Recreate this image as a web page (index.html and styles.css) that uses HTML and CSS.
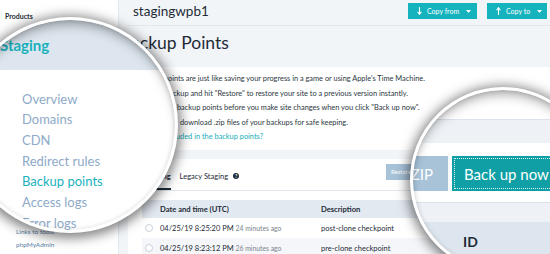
FILE: index.html
```html
<!DOCTYPE html>
<html lang="en">
<head>
    <meta charset="UTF-8">
    <meta name="viewport" content="width=device-width, initial-scale=1.0">
    <title>Backup Points</title>
    <link rel="stylesheet" href="styles.css">
</head>
<body>
    <div class="app">
        <aside class="sidebar">
            <div class="side-title">Products</div>
            <div class="side-links">
                <div>Links to tools</div>
                <div>phpMyAdmin</div>
            </div>
        </aside>

        <main class="main">
            <header class="topbar">
                <div class="site-name">stagingwpb1</div>
                <div class="copy-btns">
                    <button class="copy-btn from">
                        <svg width="5" height="8" viewBox="0 0 5 8"><path d="M2.5 0v6.5M0.6 4.8l1.9 2.6 1.9-2.6" stroke="#fff" stroke-width="1.1" fill="none"/></svg>
                        Copy from
                        <svg class="caret" width="5" height="3" viewBox="0 0 5 3"><path d="M0 0h5L2.5 3z" fill="#fff"/></svg>
                    </button>
                    <button class="copy-btn to">
                        <svg width="5" height="8" viewBox="0 0 5 8"><path d="M2.5 8V1.5M0.6 3.2l1.9-2.6 1.9 2.6" stroke="#fff" stroke-width="1.1" fill="none"/></svg>
                        Copy to
                        <svg class="caret" width="5" height="3" viewBox="0 0 5 3"><path d="M0 0h5L2.5 3z" fill="#fff"/></svg>
                    </button>
                </div>
            </header>

            <h1 class="page-title">Backup Points</h1>

            <section class="card intro">
                <p>Backup points are just like saving your progress in a game or using Apple's Time Machine.</p>
                <p>Select a backup and hit "Restore" to restore your site to a previous version instantly.</p>
                <p>Create new backup points before you make site changes when you click "Back up now".</p>
                <p>You can also download .zip files of your backups for safe keeping.</p>
                <a class="intro-link" href="#">What is included in the backup points?</a>
            </section>

            <section class="card backups">
                <div class="tabs-row">
                    <div class="tab active">Staging</div>
                    <div class="tab">Legacy Staging <span class="help">?</span></div>
                    <div class="actions">
                        <button class="act-btn">Restore</button>
                    </div>
                </div>

                <table class="backup-table">
                    <colgroup>
                        <col class="col-radio">
                        <col class="col-date">
                        <col>
                    </colgroup>
                    <thead>
                        <tr><th></th><th>Date and time (UTC)</th><th>Description</th></tr>
                    </thead>
                    <tbody>
                        <tr>
                            <td><span class="radio"></span></td>
                            <td>04/25/19 8:25:20 PM <span class="ago">24 minutes ago</span></td>
                            <td>post-clone checkpoint</td>
                        </tr>
                        <tr>
                            <td><span class="radio"></span></td>
                            <td>04/25/19 8:23:12 PM <span class="ago">26 minutes ago</span></td>
                            <td>pre-clone checkpoint</td>
                        </tr>
                    </tbody>
                </table>
            </section>
        </main>
    </div>

    <!-- magnifier over the sidebar menu -->
    <div class="lens lens-left">
        <div class="lens-view">
            <div class="lv-band"><span class="lv-title">Staging</span></div>
            <ul class="lv-menu">
                <li>Overview</li>
                <li>Domains</li>
                <li>CDN</li>
                <li>Redirect rules</li>
                <li class="current">Backup points</li>
                <li>Access logs</li>
                <li>Error logs</li>
            </ul>
        </div>
    </div>

    <!-- magnifier over the backup button -->
    <div class="lens lens-right">
        <div class="lens-view">
            <div class="rv-top"></div>
            <div class="rv-band"></div>
            <div class="rv-buttons">
                <button class="rv-zip">Download ZIP</button>
                <button class="rv-backup">Back up now</button>
            </div>
            <div class="rv-sub"></div>
            <div class="rv-head"><span>ID</span></div>
        </div>
    </div>
</body>
</html>
```

FILE: styles.css
```css
:root {
    --page-bg: #f2f5f8;
    --ink: #1e2b37;
    --teal: #15b3be;
    --teal-dark: #0f9fa4;
    --muted-blue: #a8c2d8;
    --menu-blue: #8eaac8;
    --line: #e2e8ee;
    --band: #dde6ee;
}

* {
    box-sizing: border-box;
}

body {
    margin: 0;
    width: 550px;
    height: 254px;
    overflow: hidden;
    position: relative;
    background: var(--page-bg);
    font-family: Lato, "Open Sans", sans-serif;
    color: var(--ink);
}

button {
    font-family: inherit;
    border: none;
    cursor: pointer;
}

.app {
    display: flex;
    height: 254px;
}

/* sidebar */
.sidebar {
    width: 119px;
    flex: none;
    background: #fff;
    border-right: 1px solid var(--line);
    display: flex;
    flex-direction: column;
    padding: 12px 0 0 5px;
}

.side-title {
    font-size: 7px;
    font-weight: 700;
}

.side-links {
    margin-top: auto;
    padding: 0 0 3px 11px;
    font-size: 6.5px;
    line-height: 13px;
    color: #5b7ea6;
}

/* main column */
.main {
    flex: 1;
    min-width: 0;
    overflow: hidden;
}

.topbar {
    height: 26px;
    border-bottom: 1px solid var(--line);
    display: flex;
    justify-content: space-between;
    padding: 3px 3px 0 14px;
    margin-left: 9px;
}

.site-name {
    font-size: 13.5px;
    line-height: 16px;
    margin-left: -9px;
}

.copy-btns {
    display: flex;
    gap: 10px;
}

.copy-btn {
    height: 16px;
    background: var(--teal);
    color: #fff;
    font-size: 7px;
    display: flex;
    align-items: center;
    gap: 5px;
    padding: 0 0 0 9px;
}

.copy-btn.from { width: 69px; }
.copy-btn.to { width: 60px; }

.copy-btn .caret {
    margin-left: 2px;
}

.page-title {
    margin: 0;
    height: 41px;
    padding: 7px 0 0 1px;
    font-size: 17.5px;
    line-height: 20px;
    font-weight: 400;
}

.card {
    background: #fff;
    margin-left: 9px;
}

.intro {
    height: 83px;
    padding: 5px 10px;
    font-size: 7.4px;
    line-height: 14.5px;
    color: #2b3742;
}

.intro p {
    margin: 0;
}

.intro-link {
    color: #16aebb;
    text-decoration: none;
}

.backups {
    margin-top: 9px;
    height: 120px;
    padding: 0 8px 0 14px;
}

.tabs-row {
    height: 32px;
    border-bottom: 1px solid var(--line);
    display: flex;
    align-items: stretch;
    gap: 9px;
    padding-left: 4px;
}

.tab {
    display: flex;
    align-items: center;
    gap: 5px;
    padding-top: 5px;
    font-size: 7.5px;
    border-bottom: 2px solid transparent;
}

.tab.active {
    font-weight: 700;
    border-bottom-color: var(--ink);
}

.help {
    width: 6px;
    height: 6px;
    border-radius: 50%;
    background: var(--ink);
    color: #fff;
    font-size: 5px;
    font-weight: 700;
    display: inline-flex;
    align-items: center;
    justify-content: center;
}

.actions {
    margin-left: auto;
    margin-right: 120px;
    display: flex;
    align-items: center;
    padding-bottom: 6px;
}

.act-btn {
    height: 16px;
    width: 36px;
    padding: 0 5px;
    text-align: left;
    background: var(--muted-blue);
    color: #fff;
    font-size: 6px;
}

.backup-table {
    margin-top: 9px;
    width: 100%;
    border-collapse: collapse;
    table-layout: fixed;
    font-size: 7.5px;
}

.col-radio { width: 18px; }
.col-date { width: 161px; }

.backup-table th {
    height: 18px;
    background: #e2e9f0;
    text-align: left;
    font-weight: 700;
    font-size: 7.6px;
    padding: 0;
}

.backup-table td {
    height: 20px;
    padding: 0;
    white-space: nowrap;
}

.backup-table tbody tr:nth-child(2) td {
    background: #f4f6f9;
}

.radio {
    display: block;
    margin-left: 3px;
    width: 8px;
    height: 8px;
    border-radius: 50%;
    border: 1px solid #c9d1d9;
    background: #fff;
}

.ago {
    font-size: 6.8px;
    color: #7b848d;
}

/* magnifiers */
.lens {
    position: absolute;
    border-radius: 50%;
    border: 3px solid #fff;
    overflow: hidden;
    background: #fff;
    box-shadow: 0 2px 12px 3px rgba(0, 0, 0, 0.5);
}

.lens::after {
    content: "";
    position: absolute;
    inset: 0;
    border-radius: 50%;
    box-shadow: inset 0 9px 12px -5px rgba(0, 0, 0, 0.35), inset 0 0 5px rgba(0, 0, 0, 0.15);
}

.lens-view {
    position: absolute;
    width: 550px;
    height: 280px;
    background: #fff;
}

.lens-left {
    left: -38px;
    top: 17px;
    width: 216px;
    height: 216px;
}

.lens-left .lens-view {
    left: 35px;
    top: -20px;
}

.lv-band {
    height: 70px;
    background: var(--band);
    padding-top: 35px;
}

.lv-title {
    display: block;
    font-size: 15px;
    line-height: 20px;
    font-weight: 700;
    color: #19b1bd;
}

.lv-menu {
    list-style: none;
    margin: 0;
    padding: 18.6px 0 0 22px;
    font-size: 13px;
    line-height: 20.7px;
    color: var(--menu-blue);
}

.lv-menu .current {
    color: #1ab2be;
}

.lens-right {
    left: 410px;
    top: 87px;
    width: 186px;
    height: 186px;
}

.lens-right .lens-view {
    left: -413px;
    top: -90px;
}

.rv-top {
    height: 119px;
}

.rv-band {
    height: 24px;
    border-top: 1px solid #dce3ea;
    background: #eef2f6;
}

.rv-buttons {
    margin-top: 13px;
    height: 35px;
    display: grid;
    grid-template-columns: 448px 140px;
    column-gap: 4px;
}

.rv-zip {
    justify-self: end;
    padding: 0 15px;
    background: var(--muted-blue);
    color: #fff;
    font-size: 15px;
}

.rv-backup {
    background: var(--teal-dark);
    color: #fff;
    font-size: 15px;
    text-align: left;
    padding-left: 12px;
    outline: 1px dotted rgba(255, 255, 255, 0.85);
    outline-offset: -3px;
}

.rv-sub {
    margin-top: 11px;
    height: 20px;
    border-top: 1px solid #d9e1e8;
    background: #eef2f6;
}

.rv-head {
    height: 60px;
    background: var(--band);
    padding: 12px 0 0 463px;
    font-size: 14px;
    line-height: 16px;
    font-weight: 700;
}
```
